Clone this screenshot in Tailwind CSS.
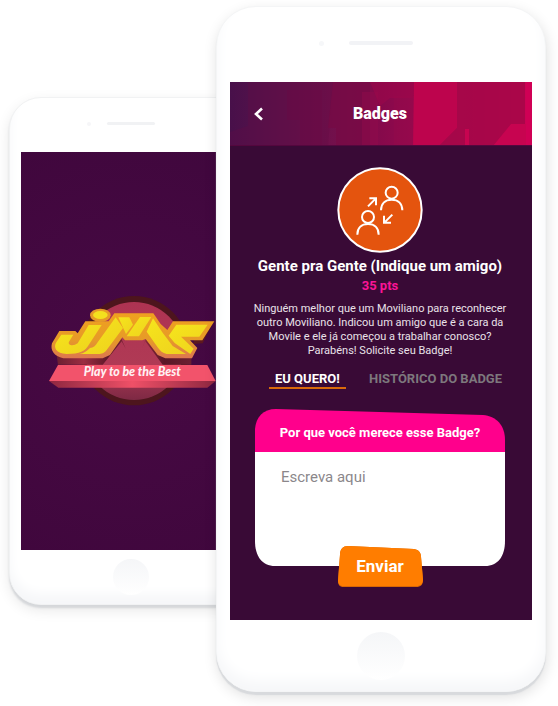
<!DOCTYPE html>
<html lang="pt-BR">
<head>
<meta charset="utf-8">
<meta name="viewport" content="width=device-width, initial-scale=1">
<title>JMS – Badges</title>
<script src="https://cdn.jsdelivr.net/npm/@tailwindcss/browser@4"></script>
</head>
<body class="bg-white">
<main class="mx-auto flex max-w-3xl items-start overflow-hidden pt-1.5 pr-3 pb-3.5 pl-[9px]">

  <!-- Splash screen phone -->
  <section aria-label="Tela inicial" class="mt-[91px] min-w-0 flex-[219] rounded-[32px] border border-[#f1f2f3] bg-white px-[11px] pb-[9px] shadow-[0_3px_2px_#d5d7da,0_5px_14px_#00000018,inset_0_-10px_12px_#f6f7f9]">
    <div class="flex h-[54px] items-center justify-center pb-1">
      <span class="relative h-[3px] w-12 rounded-full bg-[#f1f2f4]"><span class="absolute -left-5 size-1 rounded-full bg-[#f6f6f8]"></span></span>
    </div>
    <div class="flex h-[398px] items-center justify-center overflow-hidden bg-[radial-gradient(circle_at_center,#470944,#40073d)]">
      <svg viewBox="3 3 600 420" class="w-[200px] shrink-0" role="img" aria-label="JMS Play to be the Best">
        <defs>
          <linearGradient id="disc" x1="0" y1="0" x2="0" y2="1"><stop offset="0" stop-color="#ad3352"/><stop offset=".65" stop-color="#b03a55"/><stop offset="1" stop-color="#7d2944"/></linearGradient>
          <linearGradient id="gold" x1="0" y1="0" x2="0" y2="1"><stop offset="0" stop-color="#f0a01f"/><stop offset=".6" stop-color="#e69a28"/><stop offset="1" stop-color="#dd7650"/></linearGradient>
          <linearGradient id="depth" x1="0" y1="0" x2="1" y2="0"><stop offset="0" stop-color="#6b1f31"/><stop offset=".2" stop-color="#9c2d42"/><stop offset=".4" stop-color="#591626"/><stop offset=".6" stop-color="#9c2d42"/><stop offset=".8" stop-color="#591626"/><stop offset="1" stop-color="#6b1f31"/></linearGradient>
          <linearGradient id="fold"><stop offset="0" stop-color="#8e2740"/><stop offset=".5" stop-color="#ef5067"/><stop offset="1" stop-color="#8e2740"/></linearGradient>
          <linearGradient id="yel" x1="0" y1="0" x2="1" y2="1"><stop offset="0" stop-color="#f6e51c"/><stop offset="1" stop-color="#eed21e"/></linearGradient>
        </defs>
        <circle cx="312" cy="212" r="164" fill="#4d151d"/>
        <circle cx="312" cy="213" r="147" fill="url(#disc)"/>
        <path d="M80 225 L212 200 L272 172 L288 208 H335 L350 172 L405 210 H484 V254 H398 L345 182 L335 208 H288 L275 184 L218 254 H84Z" fill="url(#depth)"/>
        <path d="M495 160 L545 134 L518 190 L490 192Z" fill="#5d181f"/>
        <path d="M88 153 H136 L143 160 L166 124 H236 L253 100 H370 L392 132 L412 150 L429 124 H553 L517 181 H480 L502 204 L486 235 H406 L383 225 L347 177 L337 181 H285 L277 172 L240 225 L218 235 H100 C72 229 60 210 66 190Z" fill="url(#gold)"/>
        <ellipse cx="211" cy="106" rx="31" ry="20" fill="#e69a28"/>
        <ellipse cx="211" cy="105" rx="22" ry="12" fill="#f3e01e"/>
        <path d="M94 164 H130 L117 185 C112 196 130 200 143 190 L176 135 H215 L178 192 C165 214 150 222 110 222 C78 220 70 202 78 188Z" fill="url(#yel)"/>
        <path d="M148 222 C162 220 172 212 180 204 C190 204 196 198 203 187 L257 112 L279 144 L230 210 C222 220 215 222 205 222Z" fill="url(#yel)"/>
        <path d="M265 112 H298 L309 134 L288 162Z" fill="url(#yel)"/>
        <path d="M330 111 H364 L327 169 H290Z" fill="url(#yel)"/>
        <path d="M369 115 L398 158 L428 198 L468 222 H410 C398 219 390 212 384 203 L350 155Z" fill="url(#yel)"/>
        <path d="M439 134 H533 L508 170 H453 L491 206 L481 222 L434 189 L416 167Z" fill="url(#yel)"/>
        <path d="M57 303 H557 L532 323 H85Z" fill="url(#fold)"/>
        <path d="M84 255 H532 L557 303 H57Z" fill="#f2536b"/>
        <text x="307" y="288" text-anchor="middle" font-family="Lato, sans-serif" font-weight="900" font-style="italic" font-size="37" fill="#fff0f2">Play to be the Best</text>
      </svg>
    </div>
    <div class="mx-auto mt-[9px] size-9 rounded-full bg-linear-to-b from-[#f5f6f8] to-white"></div>
  </section>

  <!-- Badge request phone -->
  <section aria-label="Badges" class="relative -ml-9 min-w-0 flex-[302] rounded-[40px] border border-[#f4f5f6] bg-white px-[13px] pb-[11px] shadow-[0_3px_1px_#d8dadd,1px_5px_14px_#00000020,inset_0_-10px_14px_#f6f7f9]">
    <div class="flex h-[75px] items-center justify-center pb-1">
      <span class="relative h-1 w-16 rounded-full bg-[#f2f3f6]"><span class="absolute -left-[30px] size-[5px] rounded-full bg-[#f6f7f9]"></span></span>
    </div>
    <div class="bg-[#390a36] pb-[33px]">
      <header class="relative flex h-16 items-center justify-center overflow-hidden bg-linear-to-r from-[#48104a] via-[#86094b] to-[#cf0054]">
        <svg class="absolute inset-0 h-full w-full" viewBox="0 0 302 64" preserveAspectRatio="none" aria-hidden="true">
          <path d="M18 0H103L98 64H0V50L18 44Z" fill="#620b46" opacity=".35"/>
          <path d="M57 8H92V64H70V38H57Z" fill="#6c0945" opacity=".35"/>
          <path d="M103 0H140V64H106V46H98Z" fill="#760a45" opacity=".7"/>
          <path d="M132 10H148V64H132ZM164 14H183V64H164Z" fill="#950a4b" opacity=".4"/>
          <path d="M140 0H185L183 16H160L150 24Z" fill="#a00549" opacity=".5"/>
          <path d="M184 0H227V46L209 64H183Z" fill="#bd044d"/>
          <path d="M227 0H295V42L263 64H209L227 46Z" fill="#a50748" opacity=".85"/>
          <path d="M281 42H302V64H263ZM235 47H239V64H235Z" fill="#c70450"/>
          <path d="M296 0H302V64H296Z" fill="#d00055"/>
          <path d="M0 63H302V64H0Z" fill="#54073e"/>
        </svg>
        <button type="button" aria-label="Voltar" class="absolute left-[17px] flex size-6 items-center justify-center">
          <svg viewBox="0 0 12 14" class="h-3.5 w-3" fill="none" stroke="#fff" stroke-width="2.6"><path d="M9 1.500 3 7l6 5.500"/></svg>
        </button>
        <h1 class="relative pr-0.5 font-['Roboto',sans-serif] text-base font-black text-white">Badges</h1>
      </header>

      <div class="flex flex-col items-center pt-[21px] pr-0.5 text-center">
        <svg viewBox="0 0 258 258" class="size-[86px]" role="img" aria-label="Indicação" fill="none" stroke="#fff">
          <circle cx="129" cy="129" r="125" fill="#e4540e" stroke-width="6"/>
          <g stroke-width="6">
            <circle cx="164" cy="77" r="18"/><path d="M132 130c0-21 13-32 32-32s32 11 32 32"/>
            <circle cx="93" cy="150" r="18"/><path d="M61 203c0-21 13-32 32-32s32 11 32 32"/>
            <path d="M93 118 116 95M97 94H117V115M166 143 142 167M141 146V167H162"/>
          </g>
        </svg>
        <h2 class="mt-px font-['Roboto',sans-serif] text-[15px] leading-6 font-bold whitespace-nowrap text-white">Gente pra Gente (Indique um amigo)</h2>
        <p class="font-['Roboto',sans-serif] text-[13px] leading-4 font-bold text-[#fa1496]">35 pts</p>
        <p class="mt-2 font-['Roboto',sans-serif] text-[11px] leading-[14px] whitespace-nowrap text-[#e9e2e9]">Ninguém melhor que um Moviliano para reconhecer<br>outro Moviliano. Indicou um amigo que é a cara da<br>Movile e ele já começou a trabalhar conosco?<br>Parabéns! Solicite seu Badge!</p>
      </div>

      <nav class="mt-[13px] flex justify-between pr-[30px] pl-[39px] font-['Roboto',sans-serif] text-[13px] leading-4 font-bold whitespace-nowrap">
        <a href="#quero" aria-current="page" class="border-b-2 border-[#d96a0b] px-1.5 text-white">EU QUERO!</a>
        <a href="#historico" class="text-[#7d787d]">HISTÓRICO DO BADGE</a>
      </nav>

      <form class="relative mr-[27px] ml-[25px] mt-5">
        <svg class="absolute inset-x-0 top-0 h-[157px] w-full" viewBox="0 0 250 157" preserveAspectRatio="none" aria-hidden="true">
          <path d="M0 43H250V132C250 147 243 157 230 157H20C7 157 0 147 0 132Z" fill="#fff"/>
          <path d="M0 43V20C1 8 8 0 21 0L228 6C241 7 250 16 250 31V43Z" fill="#ff008c"/>
        </svg>
        <label for="motivo" class="relative flex h-11 items-center justify-center pt-1 font-['Roboto',sans-serif] text-[13px] font-bold whitespace-nowrap text-white">Por que você merece esse Badge?</label>
        <textarea id="motivo" placeholder="Escreva aqui" class="relative block h-[93px] w-full resize-none bg-transparent px-[26px] pt-3 font-['Roboto',sans-serif] text-[15px] leading-6 text-[#333] outline-none placeholder:text-[#8b878b]"></textarea>
        <button type="button" class="relative mx-auto flex h-[41px] w-[86px] items-center justify-center font-['Roboto',sans-serif] text-[17px] font-bold text-white">
          <svg class="absolute inset-0 h-full w-full" viewBox="0 0 86 42" preserveAspectRatio="none" aria-hidden="true">
            <path d="M3 9C3 3 6 0 11 0L77 3C82 4 84 7 84 11L86 35C86 39 84 42 79 42H7C3 42 1 40 1 36Z" fill="#d86705"/>
            <path d="M3 9C3 3 6 0 11 0L77 3C82 4 84 7 84 11L86 34C86 38 84 41 79 41H7C3 41 1 39 1 35Z" fill="#ff7d00"/>
          </svg>
          <span class="relative">Enviar</span>
        </button>
      </form>
    </div>
    <div class="mx-auto mt-3 size-12 rounded-full bg-linear-to-b from-[#f5f6f8] to-white"></div>
  </section>
</main>
</body>
</html>
